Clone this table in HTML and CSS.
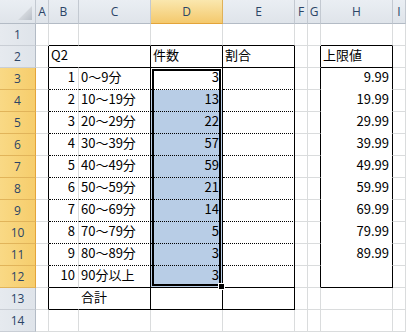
FILE: index.html
```html
<!DOCTYPE html>
<html lang="ja">
<head>
    <meta charset="UTF-8">
    <meta name="viewport" content="width=device-width, initial-scale=1.0">
    <title>度数分布</title>
    <link rel="stylesheet" href="styles.css">
</head>
<body>
    <div class="sheet">
        <!-- 列見出し -->
        <div class="corner"><span class="corner-mark"></span></div>
        <div class="hd">A</div>
        <div class="hd">B</div>
        <div class="hd">C</div>
        <div class="hd sel">D</div>
        <div class="hd">E</div>
        <div class="hd">F</div>
        <div class="hd">G</div>
        <div class="hd">H</div>
        <div class="hd">I</div>

        <!-- 1 -->
        <div class="rh">1</div>
        <div class="c"></div>
        <div class="c bb"></div>
        <div class="c bb"></div>
        <div class="c bb"></div>
        <div class="c bb"></div>
        <div class="c"></div>
        <div class="c"></div>
        <div class="c bb"></div>
        <div class="c"></div>

        <!-- 2 -->
        <div class="rh">2</div>
        <div class="c br"></div>
        <div class="c bb nr">Q2</div>
        <div class="c bb br"></div>
        <div class="c bb br">件数</div>
        <div class="c bb br">割合</div>
        <div class="c"></div>
        <div class="c br"></div>
        <div class="c bb br">上限値</div>
        <div class="c"></div>

        <!-- 3 -->
        <div class="rh sel">3</div>
        <div class="c br"></div>
        <div class="c bd num">1</div>
        <div class="c bd br">0～9分</div>
        <div class="c bd br num">3</div>
        <div class="c bd br"></div>
        <div class="c"></div>
        <div class="c br"></div>
        <div class="c nb br num">9.99</div>
        <div class="c"></div>

        <!-- 4 -->
        <div class="rh sel">4</div>
        <div class="c br"></div>
        <div class="c bd num">2</div>
        <div class="c bd br">10～19分</div>
        <div class="c bd br num hl">13</div>
        <div class="c bd br"></div>
        <div class="c"></div>
        <div class="c br"></div>
        <div class="c nb br num">19.99</div>
        <div class="c"></div>

        <!-- 5 -->
        <div class="rh sel">5</div>
        <div class="c br"></div>
        <div class="c bd num">3</div>
        <div class="c bd br">20～29分</div>
        <div class="c bd br num hl">22</div>
        <div class="c bd br"></div>
        <div class="c"></div>
        <div class="c br"></div>
        <div class="c nb br num">29.99</div>
        <div class="c"></div>

        <!-- 6 -->
        <div class="rh sel">6</div>
        <div class="c br"></div>
        <div class="c bd num">4</div>
        <div class="c bd br">30～39分</div>
        <div class="c bd br num hl">57</div>
        <div class="c bd br"></div>
        <div class="c"></div>
        <div class="c br"></div>
        <div class="c nb br num">39.99</div>
        <div class="c"></div>

        <!-- 7 -->
        <div class="rh sel">7</div>
        <div class="c br"></div>
        <div class="c bd num">5</div>
        <div class="c bd br">40～49分</div>
        <div class="c bd br num hl">59</div>
        <div class="c bd br"></div>
        <div class="c"></div>
        <div class="c br"></div>
        <div class="c nb br num">49.99</div>
        <div class="c"></div>

        <!-- 8 -->
        <div class="rh sel">8</div>
        <div class="c br"></div>
        <div class="c bd num">6</div>
        <div class="c bd br">50～59分</div>
        <div class="c bd br num hl">21</div>
        <div class="c bd br"></div>
        <div class="c"></div>
        <div class="c br"></div>
        <div class="c nb br num">59.99</div>
        <div class="c"></div>

        <!-- 9 -->
        <div class="rh sel">9</div>
        <div class="c br"></div>
        <div class="c bd num">7</div>
        <div class="c bd br">60～69分</div>
        <div class="c bd br num hl">14</div>
        <div class="c bd br"></div>
        <div class="c"></div>
        <div class="c br"></div>
        <div class="c nb br num">69.99</div>
        <div class="c"></div>

        <!-- 10 -->
        <div class="rh sel">10</div>
        <div class="c br"></div>
        <div class="c bd num">8</div>
        <div class="c bd br">70～79分</div>
        <div class="c bd br num hl">5</div>
        <div class="c bd br"></div>
        <div class="c"></div>
        <div class="c br"></div>
        <div class="c nb br num">79.99</div>
        <div class="c"></div>

        <!-- 11 -->
        <div class="rh sel">11</div>
        <div class="c br"></div>
        <div class="c bd num">9</div>
        <div class="c bd br">80～89分</div>
        <div class="c bd br num hl">3</div>
        <div class="c bd br"></div>
        <div class="c"></div>
        <div class="c br"></div>
        <div class="c nb br num">89.99</div>
        <div class="c"></div>

        <!-- 12 -->
        <div class="rh sel">12</div>
        <div class="c br"></div>
        <div class="c bb num">10</div>
        <div class="c bb br">90分以上</div>
        <div class="c bb br num hl">3</div>
        <div class="c bb br"></div>
        <div class="c"></div>
        <div class="c br"></div>
        <div class="c bb br"></div>
        <div class="c"></div>

        <!-- 13 -->
        <div class="rh">13</div>
        <div class="c br"></div>
        <div class="c bb nr"></div>
        <div class="c bb br">合計</div>
        <div class="c bb br"></div>
        <div class="c bb br"></div>
        <div class="c"></div>
        <div class="c"></div>
        <div class="c"></div>
        <div class="c"></div>

        <!-- 14 -->
        <div class="rh">14</div>
        <div class="c"></div>
        <div class="c"></div>
        <div class="c"></div>
        <div class="c"></div>
        <div class="c"></div>
        <div class="c"></div>
        <div class="c"></div>
        <div class="c"></div>
        <div class="c"></div>

        <!-- D3:D12 の選択枠 -->
        <div class="selection"><span class="fill-handle"></span></div>
    </div>
</body>
</html>
```

FILE: styles.css
```css
body {
    margin: 0;
    background-color: #ffffff;
}
.sheet {
    position: relative;
    display: grid;
    grid-template-columns: 36px 13px 30px 72px 72px 72px 13px 13px 72px 13px;
    grid-template-rows: 24px repeat(14, 22px);
    width: 406px;
    height: 332px;
    overflow: hidden;
    font-family: "Noto Sans CJK JP", "Noto Sans", sans-serif;
    font-size: 13px;
    color: #000000;
}
.sheet > div {
    box-sizing: border-box;
}

/* 見出し */
.corner,
.hd,
.rh {
    display: flex;
    align-items: center;
    justify-content: center;
    font-family: "Open Sans", "Liberation Sans", sans-serif;
    font-size: 12px;
    color: #2b4466;
    background: linear-gradient(#eaeef3, #dfe4ea);
    border-right: 1px solid #c3c9d1;
    border-bottom: 1px solid #b3bbc5;
}
.corner {
    align-items: flex-end;
    justify-content: flex-end;
    padding: 0 3px 3px 0;
}
.corner-mark {
    width: 14px;
    height: 14px;
    background: linear-gradient(135deg, #eef0f3, #b9bfc7);
    clip-path: polygon(100% 0, 100% 100%, 0 100%);
}
.rh {
    padding-bottom: 1px;
    background: linear-gradient(90deg, #e6eaef, #dfe4ea);
    border-right: 1px solid #b3bbc5;
    border-bottom: 1px solid #c9ced5;
}
.hd.sel {
    background: linear-gradient(#fae7ae, #f4c96d);
    border-bottom-color: #e3a43a;
    border-right-color: #dfb159;
}
.rh.sel {
    background: linear-gradient(90deg, #f9d985, #f6cd6c);
    border-right-color: #e3a43a;
    border-bottom-color: #e1b45a;
}

/* セル */
.c {
    padding: 0 2px 0 2px;
    line-height: 17px;
    white-space: nowrap;
    background-color: #ffffff;
    border-right: 1px solid #dadcdd;
    border-bottom: 1px solid #dadcdd;
}
.num {
    text-align: right;
    padding-right: 3px;
}
.br {
    border-right-color: #000000;
}
.bb {
    border-bottom-color: #000000;
}
.bd {
    border-bottom: 1px dotted #000000;
}
.nr {
    border-right-color: #ffffff;
}
.nb {
    border-bottom-color: #ffffff;
}
.hl {
    background-color: #b8cde6;
}

/* 選択範囲 */
.selection {
    position: absolute;
    left: 152px;
    top: 69px;
    width: 69px;
    height: 217px;
    border: 2px solid #000000;
}
.fill-handle {
    position: absolute;
    right: -5px;
    bottom: -5px;
    width: 5px;
    height: 5px;
    background-color: #000000;
    box-shadow: 0 0 0 1px #ffffff;
}
```
